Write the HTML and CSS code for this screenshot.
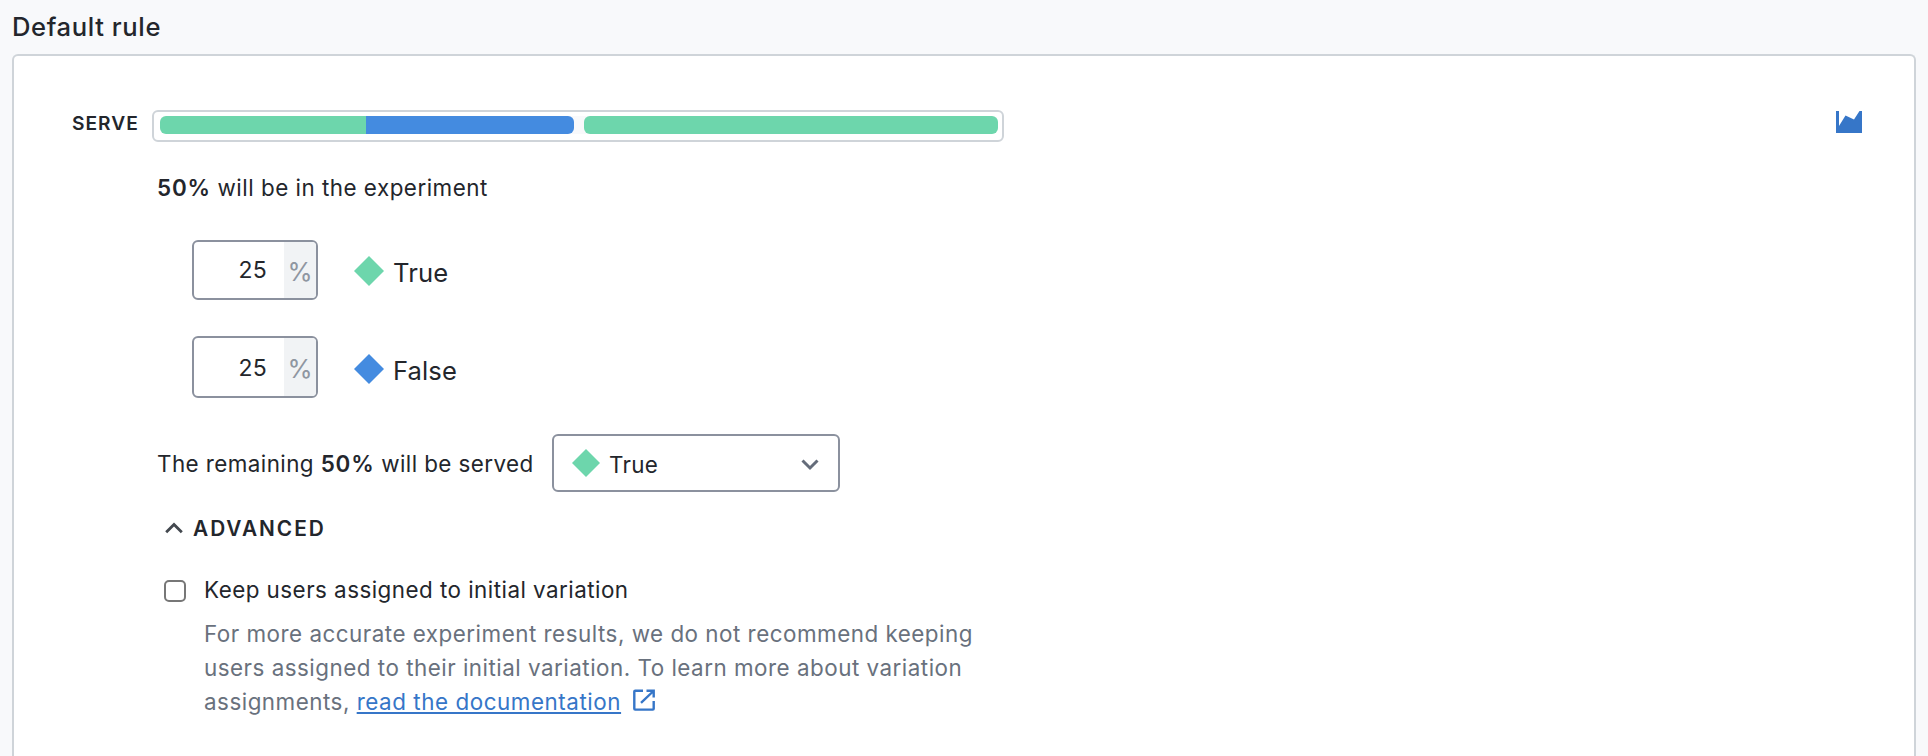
FILE: index.html
```
<!DOCTYPE html>
<html lang="en">
<head>
<meta charset="utf-8">
<title>Default rule</title>
<link rel="stylesheet" href="styles.css">
</head>
<body>
<h2 class="title">Default rule</h2>
<section class="panel">
  <div class="serve-row">
    <span class="serve-label">SERVE</span>
    <div class="rollout">
      <div class="track">
        <div class="group experiment"><span class="seg green"></span><span class="seg blue"></span></div>
        <div class="group rest green"></div>
      </div>
    </div>
    <svg class="chart-icon" width="26" height="22" viewBox="0 0 26 22"><path d="M0 0H3V15L9.5 4.500L18 8.500L23.500 0H26V22H0Z" fill="#3676c8"/></svg>
  </div>
  <div class="body">
    <p class="summary"><b>50%</b> will be in the experiment</p>
    <div class="variation first">
      <div class="percent"><span class="value">25</span><span class="unit">%</span></div>
      <svg class="diamond" width="30" height="30" viewBox="0 0 30 30"><path d="M15 0L30 15L15 30L0 15Z" fill="#6dd6ac"/></svg>
      <span class="name">True</span>
    </div>
    <div class="variation second">
      <div class="percent"><span class="value">25</span><span class="unit">%</span></div>
      <svg class="diamond" width="30" height="30" viewBox="0 0 30 30"><path d="M15 0L30 15L15 30L0 15Z" fill="#448be0"/></svg>
      <span class="name">False</span>
    </div>
    <div class="remaining">
      <p class="remaining-text">The remaining <b>50%</b> will be served</p>
      <div class="select">
        <svg width="28" height="28" viewBox="0 0 28 28"><path d="M14 0L28 14L14 28L0 14Z" fill="#6dd6ac"/></svg>
        <span class="select-value">True</span>
        <svg class="caret" width="18" height="12" viewBox="0 0 18 12"><path d="M1.500 1.500L9 9L16.500 1.500" fill="none" stroke="#646c7a" stroke-width="3"/></svg>
      </div>
    </div>
    <div class="advanced">
      <svg width="18" height="12" viewBox="0 0 18 12"><path d="M1.200 10.300L9 2.500L16.800 10.300" fill="none" stroke="#43484f" stroke-width="2.800"/></svg>
      <span class="advanced-label">ADVANCED</span>
    </div>
    <div class="option">
      <span class="checkbox"></span>
      <div>
        <p class="option-label">Keep users assigned to initial variation</p>
        <p class="help">For more accurate experiment results, we do not recommend keeping<br>users assigned to their initial variation. To learn more about variation<br>assignments, <a class="link" href="#">read the documentation</a><svg class="external" width="22" height="22" viewBox="0 0 22 22" fill="none" stroke="#3676c8" stroke-width="2.400"><path d="M10 1.700H2.200Q1.300 1.700 1.300 2.600V19.700Q1.300 20.600 2.200 20.600H19.800Q20.700 20.600 20.700 19.700V12"/><path d="M13.500 1.700H20.700V8.500M20.500 2L8 13.800"/></svg></p>
      </div>
    </div>
  </div>
</section>
</body>
</html>
```

FILE: styles.css
```
* { box-sizing: border-box; }
body {
  margin: 0;
  background: #f8f9fb;
  color: #23262c;
  font: 400 22.4px/34px Inter, sans-serif;
  letter-spacing: 0.5px;
}
p, h2 { margin: 0; }
p { white-space: nowrap; }
b { font-weight: 600; letter-spacing: 0.8px; }
.green { background: #6dd6ac; }
.blue { background: #448be0; }
.title {
  padding-left: 12px;
  font-size: 25.6px;
  font-weight: 500;
  line-height: 54px;
  letter-spacing: 0.6px;
}
.panel {
  height: 702px;
  margin: 0 12px;
  padding: 54px 52px 0 58px;
  background: #fff;
  border: 2px solid #cfd4d9;
  border-bottom: 0;
  border-radius: 6px 6px 0 0;
}
.serve-row { display: flex; }
.serve-label {
  width: 80px;
  font-size: 19.2px;
  font-weight: 600;
  line-height: 26px;
  letter-spacing: 1px;
}
.rollout {
  width: 852px;
  height: 32px;
  padding: 4px 4px 0 6px;
  border: 2px solid #cfd4d9;
  border-radius: 6px;
}
.track {
  display: flex;
  gap: 10px;
  width: 838px;
  height: 18px;
  background: linear-gradient(#f8f9fb, #f8f9fb) center / 30px 100% no-repeat;
}
.group {
  display: flex;
  flex: 1;
  border-radius: 6px;
  overflow: hidden;
}
.experiment { flex: 0 0 414px; }
.seg { flex: 0 0 206px; }
.seg.blue { flex: 1; }
.chart-icon { margin: 1px 0 0 auto; }
.body { padding-left: 85px; }
.summary { margin-top: 29px; }
.variation {
  display: flex;
  align-items: center;
  margin: 35px 0 0 35px;
}
.second { margin-top: 36px; }
.percent {
  display: flex;
  width: 126px;
  height: 60px;
  border: 2px solid #8b919e;
  border-radius: 6px;
  overflow: hidden;
}
.second .percent { height: 62px; }
.value {
  width: 90px;
  padding-right: 17px;
  text-align: right;
  font-size: 23px;
  line-height: 56px;
  letter-spacing: 0.3px;
}
.unit {
  width: 32px;
  background: #f1f3f5;
  color: #8f96a1;
  font-size: 25.6px;
  line-height: 59px;
  text-align: center;
  letter-spacing: 0;
}
.second .value { line-height: 60px; }
.second .unit { line-height: 62px; }
.diamond { margin: 2px 8px 0 36px; }
.second .diamond { margin-top: 4px; }
.name {
  padding: 5px 0 0 1px;
  font-size: 25.6px;
  letter-spacing: 0.1px;
}
.second .name { padding-top: 7px; }
.remaining { display: flex; align-items: center; margin-top: 36px; }
.remaining-text { width: 395px; padding-top: 2px; letter-spacing: 0.43px; }
.select {
  display: flex;
  align-items: center;
  width: 288px;
  height: 58px;
  padding: 0 19px 0 18px;
  border: 2px solid #8b919e;
  border-radius: 6px;
}
.select-value {
  flex: 1;
  padding: 3px 0 0 9px;
  letter-spacing: 0.3px;
}
.caret { margin-top: 3px; }
.advanced {
  display: flex;
  align-items: center;
  gap: 10px;
  margin: 19px 0 0 8px;
  font-size: 20.8px;
  font-weight: 600;
  letter-spacing: 2px;
}
.advanced-label { height: 34px; line-height: 36px; }
.option { display: flex; margin: 28px 0 0 7px; }
.checkbox {
  flex: none;
  width: 22px;
  height: 22px;
  margin: 7px 18px 0 0;
  border: 2px solid #777;
  border-radius: 5px;
}
.option-label { letter-spacing: 0.47px; }
.help { margin-top: 10px; color: #69717d; }
.link {
  color: #3676c8;
  letter-spacing: 0.55px;
  text-decoration: underline;
  text-decoration-thickness: 2px;
  text-underline-offset: 2px;
  text-decoration-skip-ink: none;
}
.external { margin-left: 12px; vertical-align: -1px; }
```
